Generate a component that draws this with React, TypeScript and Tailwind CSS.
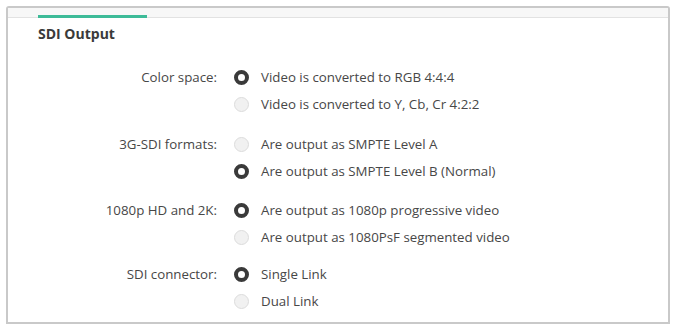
const groups = [
  {
    label: "Color space:",
    options: ["Video is converted to RGB 4:4:4", "Video is converted to Y, Cb, Cr 4:2:2"],
    selected: 0,
    space: "mt-[21px]",
  },
  {
    label: "3G-SDI formats:",
    options: ["Are output as SMPTE Level A", "Are output as SMPTE Level B (Normal)"],
    selected: 1,
    space: "mt-[13px]",
  },
  {
    label: "1080p HD and 2K:",
    options: ["Are output as 1080p progressive video", "Are output as 1080PsF segmented video"],
    selected: 0,
    space: "mt-[12px]",
  },
  {
    label: "SDI connector:",
    options: ["Single Link", "Dual Link"],
    selected: 0,
    space: "mt-[10px]",
  },
];

function Radio({ checked }: { checked: boolean }) {
  return checked ? (
    <span className="block h-[15px] w-[15px] rounded-full border-[4px] border-[#3a3a3a] bg-white" />
  ) : (
    <span className="block h-[15px] w-[15px] rounded-full border border-[#dcdcdc] bg-[#f1f1f1]" />
  );
}

export default function App() {
  return (
    <div
      className="h-[326px] w-[676px] bg-white px-[6px] pt-[6px] text-[#474747]"
      style={{ fontFamily: '"Open Sans", "Liberation Sans", sans-serif' }}
    >
      <div className="h-[318px] rounded-t-[3px] border-2 border-[#c9c9c9] bg-white">
        {/* tab strip */}
        <div className="relative h-[10px] border-b border-[#e2e2e2] bg-[#f7f7f7]">
          <div className="absolute bottom-[-1px] left-[30px] h-[3px] w-[109px] bg-[#3dbb98]" />
        </div>

        <h2 className="mt-[7px] pl-[30px] text-[14px] font-bold leading-[18px] text-[#3a3a3a]">
          SDI Output
        </h2>

        {groups.map((g) => (
          <div key={g.label} className={`grid grid-cols-[209px_1fr] ${g.space}`}>
            <div className="flex h-[27px] items-center justify-end text-[13.3px]">{g.label}</div>
            <div className="flex flex-col pl-[17px]">
              {g.options.map((o, i) => (
                <div key={o} className="flex h-[27px] items-center gap-[12px] text-[13.3px]">
                  <Radio checked={i === g.selected} />
                  <span>{o}</span>
                </div>
              ))}
            </div>
          </div>
        ))}
      </div>
    </div>
  );
}
